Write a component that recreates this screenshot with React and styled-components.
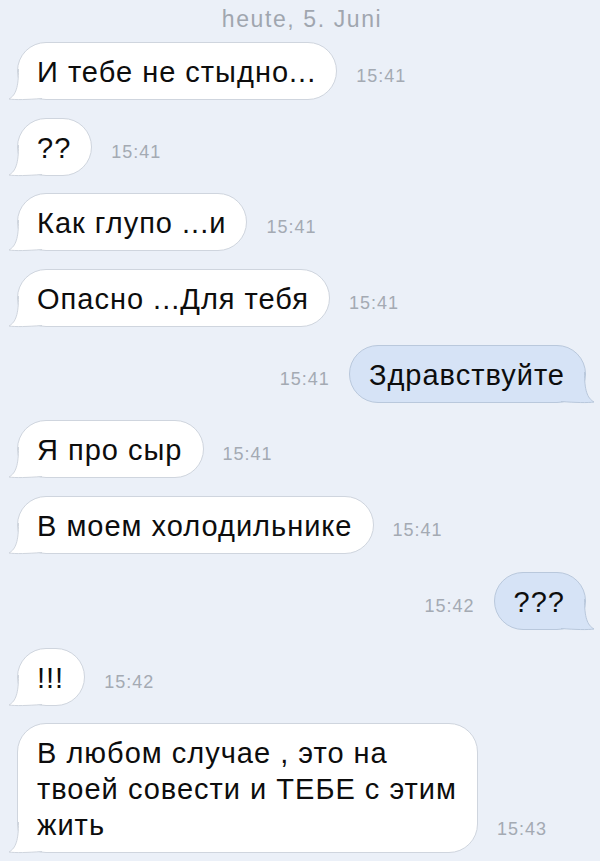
import React from "react";
import styled, { createGlobalStyle } from "styled-components";

const GlobalStyle = createGlobalStyle`
  html, body {
    margin: 0;
    padding: 0;
    background: #ebf0f8;
  }
  body {
    font-family: "Liberation Sans", Arial, sans-serif;
    -webkit-font-smoothing: antialiased;
  }
`;

const Screen = styled.div`
  width: 600px;
  height: 861px;
  overflow: hidden;
  background: #ebf0f8;
  display: flex;
  flex-direction: column;
`;

const DateLabel = styled.div`
  margin-top: 5px;
  height: 28px;
  line-height: 28px;
  text-align: center;
  font-size: 23px;
  letter-spacing: 1.6px;
  color: #a0a6af;
  padding-left: 4px;
`;

const Thread = styled.div`
  margin-top: 9px;
  display: flex;
  flex-direction: column;
  gap: 17.7px;
`;

const Row = styled.div`
  display: flex;
  flex-direction: ${(p) => (p.$out ? "row-reverse" : "row")};
  align-items: last baseline;
  gap: 19px;
  padding: ${(p) => (p.$out ? "0 14px 0 0" : "0 0 0 17px")};
`;

const Bubble = styled.div`
  position: relative;
  background: ${(p) => (p.$out ? "#d6e3f6" : "#ffffff")};
  border: 1px solid ${(p) => (p.$out ? "#b9c8dc" : "#cfd5de")};
  border-radius: 29px;
  padding: 11px 20px 9px 19px;
  font-size: 29px;
  line-height: 36px;
  letter-spacing: 1px;
  color: #0d0d0d;
  white-space: pre-line;
`;

const BubbleText = styled.span`
  position: relative;
  z-index: 1;
`;

const Time = styled.span`
  font-size: 18px;
  letter-spacing: 1px;
  color: #a4aab3;
`;

const TailSvg = styled.svg`
  position: absolute;
  z-index: 0;
  bottom: -1px;
  ${(p) => (p.$out ? "right: -11px; transform: scaleX(-1);" : "left: -11px;")}
  width: 45px;
  height: 34px;
  overflow: visible;
`;

const OUTER = "M11.5,3 C11.5,21 9,29 2,33 C8,34 21,33.6 35,32.5";

function Tail({ out }) {
  const fill = out ? "#d6e3f6" : "#ffffff";
  const stroke = out ? "#b9c8dc" : "#cfd5de";
  return (
    <TailSvg $out={out} viewBox="0 0 45 34" aria-hidden="true">
      <path d={`${OUTER} L40,4 Z`} fill={fill} stroke="none" />
      <path d={OUTER} fill="none" stroke={stroke} strokeWidth="1" />
    </TailSvg>
  );
}

const messages = [
  { text: "И тебе не стыдно...", time: "15:41" },
  { text: "??", time: "15:41" },
  { text: "Как глупо ...и", time: "15:41" },
  { text: "Опасно ...Для тебя", time: "15:41" },
  { text: "Здравствуйте", time: "15:41", out: true },
  { text: "Я про сыр", time: "15:41" },
  { text: "В моем холодильнике", time: "15:41" },
  { text: "???", time: "15:42", out: true },
  { text: "!!!", time: "15:42" },
  {
    text: "В любом случае , это на\nтвоей совести и ТЕБЕ с этим\nжить",
    time: "15:43",
  },
];

export default function App() {
  return (
    <>
      <GlobalStyle />
      <Screen>
        <DateLabel>heute, 5. Juni</DateLabel>
        <Thread>
          {messages.map((m, i) => (
            <Row key={i} $out={m.out}>
              <Bubble $out={m.out}>
                <Tail out={m.out} />
                <BubbleText>{m.text}</BubbleText>
              </Bubble>
              <Time>{m.time}</Time>
            </Row>
          ))}
        </Thread>
      </Screen>
    </>
  );
}
